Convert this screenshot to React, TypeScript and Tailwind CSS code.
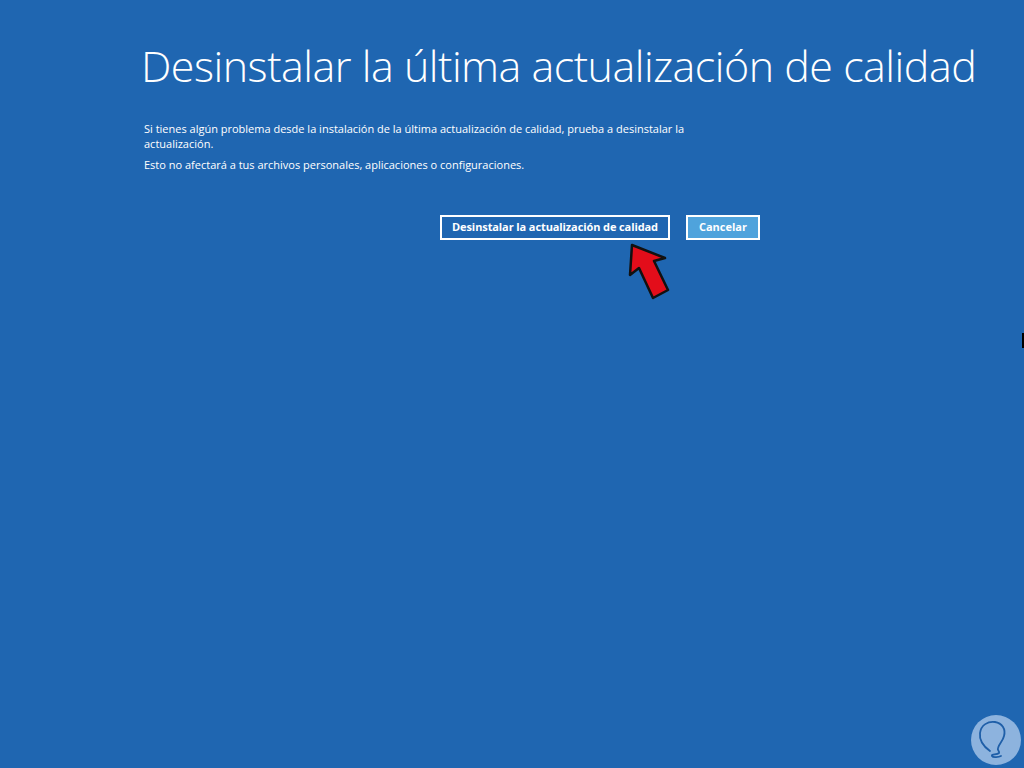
export default function App() {
  return (
    <div className="relative w-[1024px] h-[768px] overflow-hidden bg-[#1f66b1] text-white" style={{ fontFamily: '"Open Sans", "Noto Sans", sans-serif' }}>
      <div className="pl-[141px] pt-[38px]">
        <h1 className="text-[43px] font-light leading-[56px] tracking-[-0.5px] whitespace-nowrap">
          Desinstalar la última actualización de calidad
        </h1>
        <div className="mt-[27px] pl-[3px] w-[560px] text-[11px] leading-[15px]">
          <p>Si tienes algún problema desde la instalación de la última actualización de calidad, prueba a desinstalar la actualización.</p>
          <p className="mt-[6px]">Esto no afectará a tus archivos personales, aplicaciones o configuraciones.</p>
        </div>
        <div className="mt-[43px] ml-[299px] flex gap-[16px]">
          <button className="h-[25px] w-[230px] border-2 border-white text-[11px] font-bold tracking-[-0.1px]">
            Desinstalar la actualización de calidad
          </button>
          <button className="h-[25px] w-[74px] border-2 border-white bg-[#4fa3dc] text-[11px] font-bold">
            Cancelar
          </button>
        </div>
      </div>

      {/* red arrow */}
      <svg className="absolute left-[624px] top-[240px]" width="52" height="62" viewBox="0 0 52 62">
        <path
          d="M8 5 L6 35 L15 28 L29 58 L44 50 L30 21 L41 18 Z"
          fill="#e30d1a"
          stroke="#111"
          strokeWidth="2.5"
          strokeLinejoin="round"
        />
      </svg>

      {/* edge mark */}
      <div className="absolute right-0 top-[333px] w-[2px] h-[15px] bg-black" />

      {/* logo */}
      <svg className="absolute left-[969px] top-[713px]" width="54" height="54" viewBox="0 0 54 54">
        <circle cx="27" cy="27" r="25" fill="#8db3de" />
        <path
          d="M21 38 C14 33 10 28 11 20 C12 12 19 8 26 9 C33 10 37 16 35 23 C34 28 30 31 29 35 C28 38 31 38 30 40 C28 42 22 41 23 43 C24 45 30 44 32 43"
          fill="none"
          stroke="#1f5fa8"
          strokeWidth="1.8"
          strokeLinecap="round"
        />
      </svg>
    </div>
  );
}
